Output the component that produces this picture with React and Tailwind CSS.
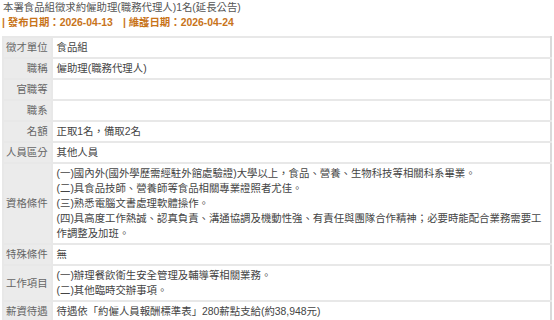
import React from 'react';

const rows = [
    { label: '徵才單位', value: ['食品組'] },
    { label: '職稱', value: ['僱助理(職務代理人)'] },
    { label: '官職等', value: [''] },
    { label: '職系', value: [''] },
    { label: '名額', value: ['正取1名，備取2名'] },
    { label: '人員區分', value: ['其他人員'] },
    {
        label: '資格條件',
        value: [
            '(一)國內外(國外學歷需經駐外館處驗證)大學以上，食品、營養、生物科技等相關科系畢業。',
            '(二)具食品技師、營養師等食品相關專業證照者尤佳。',
            '(三)熟悉電腦文書處理軟體操作。',
            '(四)具高度工作熱誠、認真負責、溝通協調及機動性強、有責任與團隊合作精神；必要時能配合業務需要工作調整及加班。',
        ],
    },
    { label: '特殊條件', value: ['無'] },
    {
        label: '工作項目',
        value: ['(一)辦理餐飲衛生安全管理及輔導等相關業務。', '(二)其他臨時交辦事項。'],
    },
    { label: '薪資待遇', value: ['待遇依「約僱人員報酬標準表」280薪點支給(約38,948元)'] },
];

export default function App() {
    return (
        <div className="w-[554px] h-[320px] overflow-hidden bg-white font-['Liberation_Sans','Noto_Sans_CJK_TC',sans-serif] text-[10.4px] leading-[15px]">
            {/* Title */}
            <div className="pl-[3px] text-[#555]">本署食品組徵求約僱助理(職務代理人)1名(延長公告)</div>
            <div className="pl-[2px] font-bold text-[#c8741a]">
                <span>| 發布日期：2026-04-13</span>
                <span className="ml-[10px]">| 維護日期：2026-04-24</span>
            </div>

            {/* Detail table */}
            <table className="mt-[6px] ml-[2px] w-[550px] border-collapse">
                <tbody>
                    {rows.map((row) => (
                        <tr key={row.label}>
                            <th className="w-[47px] bg-[#ebebeb] border-2 border-[#e8e8e8] pl-[2px] pr-[3px] py-[2px] text-right font-normal text-[#666] whitespace-nowrap align-middle">
                                {row.label}
                            </th>
                            <td className="border-2 border-[#e8e8e8] border-r-[#dadada] pl-[4px] pr-[3px] py-[2px] text-[#444] align-middle">
                                {row.value.map((line, i) => (
                                    <div key={i} className="min-h-[15px]">{line}</div>
                                ))}
                            </td>
                        </tr>
                    ))}
                </tbody>
            </table>
        </div>
    );
}
